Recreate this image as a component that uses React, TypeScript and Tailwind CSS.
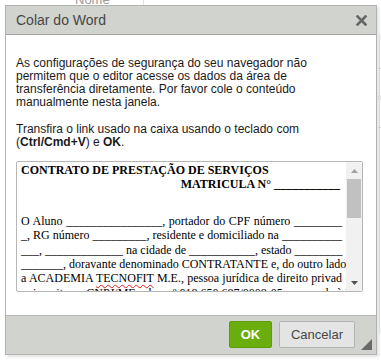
import React from 'react';

const lines = [
    'O Aluno ________________, portador do CPF número ________',
    '_, RG número _________, residente e domiciliado na __________',
    '___, _____________ na cidade de ___________, estado ________',
    '_______, doravante denominado CONTRATANTE e, do outro lado',
];

const Scrollbar = () => (
    <div className="w-[16px] bg-[#f1f1f1] flex flex-col items-center shrink-0">
        <div className="h-[17px] w-full flex items-center justify-center">
            <svg width="7" height="4" viewBox="0 0 7 4"><path d="M0 4 L3.5 0 L7 4 Z" fill="#a3a3a3" /></svg>
        </div>
        <div className="w-[14px] h-[39px] bg-[#c1c1c1]" />
        <div className="flex-1" />
        <div className="h-[17px] w-full flex items-center justify-center">
            <svg width="7" height="4" viewBox="0 0 7 4"><path d="M0 0 L3.5 4 L7 0 Z" fill="#505050" /></svg>
        </div>
    </div>
);

export default function App() {
    return (
        <div className="relative w-[381px] h-[360px] bg-white overflow-hidden font-['Liberation_Sans',Arial,sans-serif]">
            {/* page behind the dialog */}
            <div className="absolute left-[75px] top-[-10px] text-[13px] text-[#9a9a9a]">Nome</div>
            <div className="absolute left-[143px] top-0 w-px h-[6px] bg-[#e3e3e3]" />
            <div className="absolute left-[379px] top-[34px] w-px h-[300px] bg-[#e6e6e6]" />
            <div className="absolute left-[378px] top-[68px] w-[3px] h-px bg-[#dcdcdc]" />
            <div className="absolute left-[378px] top-[95px] w-[3px] h-[5px] bg-[#ececec]" />
            <div className="absolute left-[378px] top-[127px] w-[3px] h-px bg-[#dcdcdc]" />

            {/* dialog */}
            <div className="absolute left-[5px] top-[5px] w-[372px] h-[350px] border border-[#b2b2b2] flex flex-col shadow-[2px_2px_3px_rgba(0,0,0,0.12)]">
                <div className="h-[29px] bg-[#d1d3ce] border-b border-[#a5a5a5] flex items-center justify-between pl-[10px] pr-[9px] shrink-0">
                    <span className="text-[14px] text-[#474747]">Colar do Word</span>
                    <svg width="11" height="11" viewBox="0 0 11 11" className="mt-[1px]">
                        <path d="M1.5 1.5 L9.5 9.5 M9.5 1.5 L1.5 9.5" stroke="#666" strokeWidth="2.6" strokeLinecap="square" />
                    </svg>
                </div>

                <div className="flex-1 bg-white pl-[10px] pt-[22px] text-[12px] leading-[13px] text-[#1a1a1a]">
                    <p className="w-[300px]">
                        As configurações de segurança do seu navegador não permitem que o editor acesse os dados da área de transferência diretamente. Por favor cole o conteúdo manualmente nesta janela.
                    </p>
                    <p className="mt-[14px] w-[300px]">
                        Transfira o link usado na caixa usando o teclado com (<b>Ctrl/Cmd+V</b>) e <b>OK</b>.
                    </p>

                    <div className="mt-[12px] w-[347px] h-[131px] border border-[#b6b6b6] rounded-[2px] flex overflow-hidden">
                        <div className="flex-1 pl-[4px] pr-[4px] pt-[1px] font-['Liberation_Serif','Times_New_Roman',serif] text-[12px] leading-[14.4px] text-black overflow-hidden">
                            <div className="font-bold">CONTRATO DE PRESTAÇÃO DE SERVIÇOS</div>
                            <div className="font-bold text-right pr-[2px]">MATRICULA N° ___________</div>
                            <div className="mt-[22px]">
                                {lines.map(l => (
                                    <div key={l} className="text-justify [text-align-last:justify] whitespace-nowrap">{l}</div>
                                ))}
                                <div className="text-justify [text-align-last:justify] whitespace-nowrap">
                                    a ACADEMIA <span className="underline decoration-wavy decoration-[#e02020] decoration-1 underline-offset-[2px]">TECNOFIT</span> M.E., pessoa jurídica de direito privad
                                </div>
                                <div className="text-justify [text-align-last:justify] whitespace-nowrap">
                                    o, inscrita no CNPJ/MF sob o nº 018.650.687/0008-05, com sede à R
                                </div>
                            </div>
                        </div>
                        <Scrollbar />
                    </div>
                </div>

                <div className="h-[39px] bg-[#d1d3ce] border-t border-[#b8b8b8] flex items-start justify-end pt-[5px] pr-[21px] gap-[7px] relative shrink-0">
                    <button className="h-[27px] w-[43px] bg-[#69ae0c] border border-[#5f9c0b] rounded-[2px] text-white font-bold text-[13px]">OK</button>
                    <button className="h-[27px] w-[76px] bg-[#e4e4e4] border border-[#b3b3b3] rounded-[2px] text-[#474747] text-[13px]">Cancelar</button>
                    <svg width="11" height="11" viewBox="0 0 11 11" className="absolute right-[4px] bottom-[4px]">
                        <path d="M11 0 L11 11 L0 11 Z" fill="#6a6a6a" />
                    </svg>
                </div>
            </div>
        </div>
    );
}
